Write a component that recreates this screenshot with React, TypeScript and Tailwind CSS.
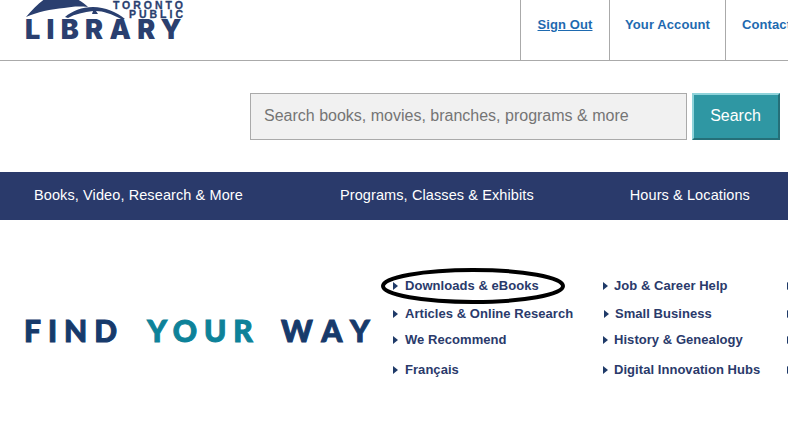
const column1 = [
  { label: 'Downloads & eBooks', top: 'mt-0' },
  { label: 'Articles & Online Research', top: 'mt-[12px]' },
  { label: 'We Recommend', top: 'mt-[10px]' },
  { label: 'Français', top: 'mt-[14px]' },
];

const column2 = [
  { label: 'Job & Career Help', top: 'mt-0', indent: '' },
  { label: 'Small Business', top: 'mt-[12px]', indent: 'pl-px' },
  { label: 'History & Genealogy', top: 'mt-[10px]', indent: '' },
  { label: 'Digital Innovation Hubs', top: 'mt-[14px]', indent: '' },
];

function Arrow() {
  return (
    <svg width="5" height="8" viewBox="0 0 5 8" className="shrink-0" aria-hidden="true">
      <path d="M0 0l5 4-5 4z" fill="#1f3a68" />
    </svg>
  );
}

function Logo() {
  return (
    <div className="relative w-[160px] h-[40px] ml-[25px] shrink-0 text-[#2a3f6f] font-['Liberation_Sans',sans-serif] font-bold">
      <svg width="110" height="20" viewBox="0 0 110 20" className="absolute left-0 top-0" aria-hidden="true">
        <path d="M1 17C8 9 14 3 21 -2L50 -2C56 1 60 4 63 7C52 6 46 7 39 8C26 9 12 12 1 17Z" fill="#2a3f6f" />
        <path d="M40 17C47 11 57 7 68 7C80 7 92 12 100 19L96 19C87 14 78 11 71 11L73 14L67 14L68 11C59 12 50 14 43 18Z" fill="#2a3f6f" />
      </svg>
      <div className="absolute right-[-1px] top-[1px] text-[10.5px] leading-[9px] tracking-[3px] whitespace-nowrap [-webkit-text-stroke:0.3px_#2a3f6f]">
        TORONTO
      </div>
      <div className="absolute right-[-1px] top-[10px] text-[10.5px] leading-[9px] tracking-[3px] whitespace-nowrap [-webkit-text-stroke:0.3px_#2a3f6f]">
        PUBLIC
      </div>
      <div className="absolute left-0 top-[20px] font-['Inter',sans-serif] font-black text-[27px] leading-[20px] tracking-[6.3px] whitespace-nowrap">
        LIBRARY
      </div>
    </div>
  );
}

export default function App() {
  return (
    <div className="relative w-[788px] h-[421px] overflow-hidden bg-white font-['Liberation_Sans',Arial,sans-serif]">
      {/* Header */}
      <header className="flex h-[61px] border-b border-[#aaaaaa]">
        <Logo />
        <nav className="flex ml-[335px] text-[13px] font-bold tracking-[0.1px] text-[#1e6ab0]">
          <a className="flex w-[89px] shrink-0 justify-center pt-[15px] border-l border-[#aaaaaa]">
            <span className="underline h-fit">Sign Out</span>
          </a>
          <a className="flex w-[116px] shrink-0 justify-center pt-[15px] border-l border-[#aaaaaa]">
            <span className="h-fit">Your Account</span>
          </a>
          <a className="w-[80px] shrink-0 pl-[16px] pt-[15px] border-l border-[#aaaaaa]">Contact</a>
        </nav>
      </header>

      {/* Search */}
      <div className="flex pl-[250px] pt-[32px] gap-[5px]">
        <div className="flex items-center w-[437px] h-[47px] pl-[13px] pb-[2px] bg-[#f1f1f1] border border-[#aaaaaa] text-[16px] text-[#757575]">
          Search books, movies, branches, programs &amp; more
        </div>
        <button className="w-[88px] h-[47px] pb-[2px] pr-[1px] bg-[#2f97a3] border-2 border-t-[#8fd3da] border-l-[#8fd3da] border-r-[#256f78] border-b-[#256f78] text-[16px] text-white">
          Search
        </button>
      </div>

      {/* Main nav */}
      <div className="flex items-center h-[48px] mt-[32px] bg-[#2a3a6b] text-[14.5px] tracking-[0.1px] text-white whitespace-nowrap">
        <span className="ml-[34px]">Books, Video, Research &amp; More</span>
        <span className="ml-[97px]">Programs, Classes &amp; Exhibits</span>
        <span className="ml-[96px]">Hours &amp; Locations</span>
      </div>

      {/* Find your way + links */}
      <div className="flex mt-[58px]">
        <div className="w-[393px] shrink-0 pl-[24px] pt-[37px] text-[30px] leading-[30px] font-black font-['Lato',sans-serif] tracking-[7px] whitespace-nowrap text-[#173a6b] [-webkit-text-stroke:1px_currentColor]">
          FIND <span className="ml-[9px] text-[#0d8299]">YOUR</span> <span className="ml-[7px] tracking-[10px]">WAY</span>
        </div>
        <ul className="w-[210px] shrink-0 text-[13px] leading-[16px] font-bold tracking-[0.05px] text-[#2a3a6b]">
          {column1.map((item) => (
            <li key={item.label} className={`flex items-center gap-[7px] ${item.top}`}>
              <Arrow />
              {item.label}
            </li>
          ))}
        </ul>
        <ul className="w-[184px] shrink-0 text-[13px] leading-[16px] font-bold tracking-[0.05px] text-[#2a3a6b]">
          {column2.map((item) => (
            <li key={item.label} className={`flex items-center gap-[6px] ${item.top} ${item.indent}`}>
              <Arrow />
              {item.label}
            </li>
          ))}
        </ul>
        <ul className="flex-1">
          {column2.map((item) => (
            <li key={item.label} className={`flex items-center h-[16px] ${item.top}`}>
              <Arrow />
            </li>
          ))}
        </ul>
      </div>

      {/* Hand-drawn circle over the first link */}
      <svg width="186" height="38" viewBox="0 0 186 38" className="absolute left-[380px] top-[267px]" aria-hidden="true">
        <ellipse cx="93" cy="19" rx="90" ry="16" fill="none" stroke="#000" strokeWidth="4" />
      </svg>
    </div>
  );
}
